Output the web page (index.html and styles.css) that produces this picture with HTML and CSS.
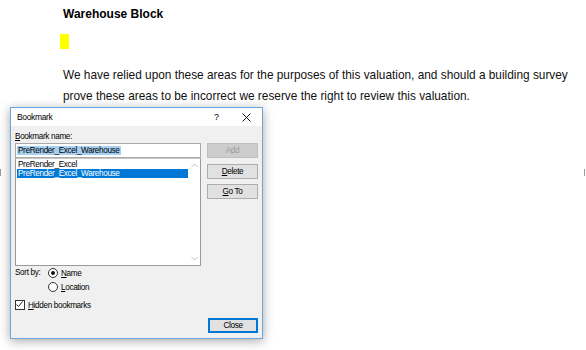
FILE: index.html
```html
<!DOCTYPE html>
<html lang="en">
<head>
    <meta charset="UTF-8">
    <title>Bookmark</title>
    <link rel="stylesheet" href="styles.css">
</head>
<body>
    <div class="doc">
        <h1 class="doc-heading">Warehouse Block</h1>
        <div class="bookmark-mark"></div>
        <p class="doc-text">We have relied upon these areas for the purposes of this valuation, and should a building survey prove these areas to be incorrect we reserve the right to review this valuation.</p>
    </div>
    <div class="margin-marks"><span></span><span></span></div>

    <div class="dialog">
        <div class="titlebar">
            <span class="title">Bookmark</span>
            <span class="help">?</span>
            <span class="close-x">
                <svg width="9" height="9" viewBox="0 0 9 9"><path d="M0.5 0.5 L8.5 8.5 M8.5 0.5 L0.5 8.5" stroke="#111" stroke-width="1" fill="none"/></svg>
            </span>
        </div>
        <div class="dlg-body">
            <div class="field-label"><u>B</u>ookmark name:</div>
            <div class="main">
                <div class="left-col">
                    <div class="name-input"><span class="sel">PreRender_Excel_Warehouse</span></div>
                    <div class="listbox">
                        <div class="items">
                            <div class="item">PreRender_Excel</div>
                            <div class="item selected">PreRender_Excel_Warehouse</div>
                        </div>
                        <div class="scrollbar">
                            <svg width="7" height="5" viewBox="0 0 7 5"><path d="M0.5 4 L3.5 1 L6.5 4" stroke="#c2c2c2" fill="none"/></svg>
                            <svg width="7" height="5" viewBox="0 0 7 5"><path d="M0.5 1 L3.5 4 L6.5 1" stroke="#c2c2c2" fill="none"/></svg>
                        </div>
                    </div>
                </div>
                <div class="right-col">
                    <div class="btn disabled">Add</div>
                    <div class="btn btn-delete"><u>D</u>elete</div>
                    <div class="btn btn-goto"><u>G</u>o To</div>
                </div>
            </div>
            <div class="sort-row">
                <span class="sort-label">Sort by:</span>
                <div class="radios">
                    <div class="opt"><span class="radio checked"></span><span><u>N</u>ame</span></div>
                    <div class="opt"><span class="radio"></span><span><u>L</u>ocation</span></div>
                </div>
            </div>
            <div class="opt check-row">
                <span class="checkbox">
                    <svg width="9" height="9" viewBox="0 0 9 9"><path d="M1.5 4.5 L3.5 6.5 L7.5 1.5" stroke="#222" stroke-width="1" fill="none"/></svg>
                </span>
                <span><u>H</u>idden bookmarks</span>
            </div>
            <div class="footer">
                <div class="btn btn-close">Close</div>
            </div>
        </div>
    </div>
</body>
</html>
```

FILE: styles.css
```css
body {
    margin: 0;
    background: #ffffff;
    font-family: "Liberation Sans", Arial, sans-serif;
    color: #000;
}
.doc {
    padding: 6px 0 0 63px;
}
.doc-heading {
    font-size: 12px;
    font-weight: bold;
    line-height: 16px;
    margin: 0;
}
.bookmark-mark {
    width: 9px;
    height: 15px;
    background: #ffff00;
    margin: 12px 0 0 -3px;
}
.doc-text {
    font-size: 11.85px;
    line-height: 21px;
    margin: 16px 0 0 0;
    width: 515px;
    color: #111;
}
.margin-marks {
    display: flex;
    justify-content: space-between;
    margin-top: 62px;
    height: 7px;
    padding: 0 1px 0 0;
}
.margin-marks span {
    width: 1px;
    background: #9a9a9a;
}

.dialog {
    position: absolute;
    left: 10px;
    top: 107px;
    width: 251px;
    height: 230px;
    border: 1px solid #6aa5dc;
    background: #f0f0f0;
    box-shadow: 0 2px 10px rgba(0,0,0,0.35);
    font-family: "Liberation Sans", Arial, sans-serif;
    font-size: 8.2px;
    letter-spacing: -0.35px;
    color: #000;
}
.titlebar {
    height: 18px;
    background: #fff;
    display: flex;
    align-items: center;
    padding-left: 6px;
}
.title {
    font-size: 8.5px;
    flex: 1;
}
.help {
    font-size: 9px;
    width: 28px;
}
.close-x {
    width: 20px;
    display: flex;
}
.dlg-body {
    padding: 6px 4px 0 4px;
}
.field-label {
    line-height: 10px;
    margin-bottom: 1px;
}
.main {
    display: flex;
    gap: 6px;
}
.left-col {
    width: 186px;
}
.name-input {
    height: 13px;
    border: 1px solid #a9a9a9;
    background: #fff;
    padding-left: 1px;
    line-height: 13px;
}
.sel {
    background: #a6cff0;
    padding: 0 1px;
}
.listbox {
    height: 106px;
    border: 1px solid #9a9a9a;
    border-top-color: #c8c8c8;
    background: #fff;
    display: flex;
}
.items {
    flex: 1;
    padding: 1px 0 0 1px;
}
.item {
    height: 9px;
    line-height: 9px;
    padding-left: 1px;
}
.item.selected {
    background: #0078d7;
    color: #fff;
}
.scrollbar {
    width: 12px;
    display: flex;
    flex-direction: column;
    justify-content: space-between;
    align-items: center;
    padding: 4px 0 4px;
}
.right-col {
    width: 51px;
    display: flex;
    flex-direction: column;
}
.btn {
    height: 13px;
    border: 1px solid #adadad;
    background: #e1e1e1;
    text-align: center;
    line-height: 13px;
}
.btn.disabled {
    background: #cccccc;
    border-color: #bfbfbf;
    color: #9d9d9d;
}
.btn-delete {
    margin-top: 6px;
}
.btn-goto {
    margin-top: 5px;
}
.sort-row {
    display: flex;
    margin-top: 2px;
}
.sort-label {
    width: 33px;
    line-height: 10px;
}
.radios {
    display: flex;
    flex-direction: column;
    gap: 4px;
}
.opt {
    display: flex;
    align-items: center;
    gap: 3px;
    height: 10px;
}
.radio {
    width: 8px;
    height: 8px;
    border: 1px solid #333;
    border-radius: 50%;
    background: #fff;
    box-sizing: content-box;
    position: relative;
}
.radio.checked::after {
    content: "";
    position: absolute;
    left: 2px;
    top: 2px;
    width: 4px;
    height: 4px;
    border-radius: 50%;
    background: #111;
}
.check-row {
    margin-top: 8px;
}
.checkbox {
    width: 8px;
    height: 8px;
    border: 1px solid #333;
    background: #fff;
    display: flex;
}
.checkbox svg {
    margin: -1px 0 0 -1px;
}
.footer {
    display: flex;
    justify-content: flex-end;
    margin-top: 8px;
}
.btn-close {
    width: 46px;
    height: 11px;
    line-height: 11px;
    border: 2px solid #0078d7;
}
```
